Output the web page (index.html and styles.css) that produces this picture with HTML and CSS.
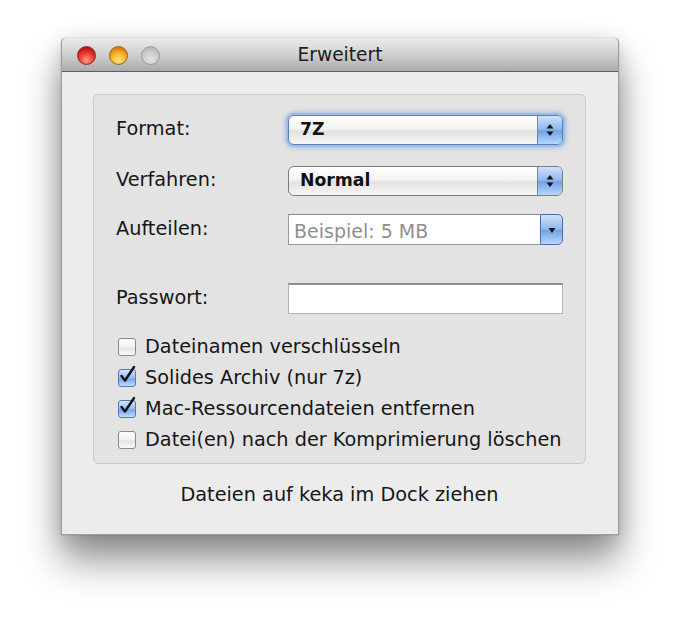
FILE: index.html
```html
<!DOCTYPE html>
<html>
<head>
<meta charset="utf-8">
<link rel="stylesheet" href="styles.css">
</head>
<body>
<div class="window">
  <div class="titlebar">
    <div class="lights">
      <span class="light red"></span>
      <span class="light yellow"></span>
      <span class="light gray"></span>
    </div>
    <div class="title">Erweitert</div>
  </div>
  <div class="content">
    <div class="group">
      <div class="row r-format">
        <div class="label">Format:</div>
        <div class="popup focused">
          <span class="ptext">7Z</span>
          <span class="arrows"><svg width="10" height="16" viewBox="0 0 10 16"><path d="M5 2 L8.5 6.5 L1.5 6.5 Z" fill="#111"/><path d="M5 14 L8.5 9.5 L1.5 9.5 Z" fill="#111"/></svg></span>
        </div>
      </div>
      <div class="row r-verf">
        <div class="label">Verfahren:</div>
        <div class="popup">
          <span class="ptext">Normal</span>
          <span class="arrows"><svg width="10" height="16" viewBox="0 0 10 16"><path d="M5 2 L8.5 6.5 L1.5 6.5 Z" fill="#111"/><path d="M5 14 L8.5 9.5 L1.5 9.5 Z" fill="#111"/></svg></span>
        </div>
      </div>
      <div class="row r-auf">
        <div class="label">Aufteilen:</div>
        <div class="combo">
          <span class="ctext">Beispiel: 5 MB</span>
          <span class="cbtn"><svg width="10" height="10" viewBox="0 0 10 10"><path d="M1.5 3 L8.5 3 L5 8 Z" fill="#111"/></svg></span>
        </div>
      </div>
      <div class="row r-pass">
        <div class="label">Passwort:</div>
        <div class="field"></div>
      </div>
      <div class="checks">
        <div class="check"><span class="box"></span><span>Dateinamen verschlüsseln</span></div>
        <div class="check"><span class="box on"><svg width="22" height="22" viewBox="0 0 22 22"><path d="M4.5 11 L8 15.5 L17 2" fill="none" stroke="#111" stroke-width="2.4" stroke-linejoin="round" stroke-linecap="round"/></svg></span><span>Solides Archiv (nur 7z)</span></div>
        <div class="check"><span class="box on"><svg width="22" height="22" viewBox="0 0 22 22"><path d="M4.5 11 L8 15.5 L17 2" fill="none" stroke="#111" stroke-width="2.4" stroke-linejoin="round" stroke-linecap="round"/></svg></span><span>Mac-Ressourcendateien entfernen</span></div>
        <div class="check"><span class="box"></span><span>Datei(en) nach der Komprimierung löschen</span></div>
      </div>
    </div>
    <div class="footer">Dateien auf keka im Dock ziehen</div>
  </div>
</div>
</body>
</html>
```
FILE: styles.css
```css
html, body {
  margin: 0;
  padding: 0;
  background: #ffffff;
}
body {
  padding-top: 38px;
  padding-left: 61px;
  min-height: 620px;
  box-sizing: border-box;
  font-family: "DejaVu Sans", "Liberation Sans", sans-serif;
  font-size: 19.3px;
  color: #161616;
}
.window {
  width: 558px;
  height: 497px;
  background: #ececec;
  border-radius: 5px 5px 0 0;
  box-shadow: 0 26px 38px rgba(0,0,0,0.42), 0 4px 22px rgba(0,0,0,0.16), 0 0 1px rgba(0,0,0,0.5);
  display: flex;
  flex-direction: column;
  box-sizing: border-box;
  border: 1px solid #9d9d9d;
  border-top: none;
}
.titlebar {
  height: 34px;
  background: linear-gradient(#ebebeb, #d3d3d3 45%, #aaaaaa);
  border-bottom: 1px solid #5c5c5c;
  border-radius: 5px 5px 0 0;
  display: flex;
  align-items: center;
  position: relative;
  box-sizing: border-box;
  flex-shrink: 0;
}
.lights {
  display: flex;
  gap: 13px;
  padding-left: 15px;
  padding-top: 1px;
}
.light {
  width: 19px;
  height: 19px;
  border-radius: 50%;
  box-sizing: border-box;
}
.light.red {
  background: radial-gradient(circle at 50% 78%, #ff9b8e 0%, #ef3a2f 45%, #b81712 80%);
  border: 1px solid #8a2a22;
}
.light.yellow {
  background: radial-gradient(circle at 50% 78%, #ffe67a 0%, #f8b52a 45%, #d7780c 80%);
  border: 1px solid #9a6a1c;
}
.light.gray {
  background: radial-gradient(circle at 50% 75%, #e4e4e4 0%, #cccccc 50%, #b5b5b5 85%);
  border: 1px solid #9d9d9d;
}
.title {
  position: absolute;
  left: 0;
  right: 0;
  top: 6px;
  text-align: center;
  font-size: 18.6px;
  color: #1c1c1c;
  pointer-events: none;
}
.content {
  flex: 1;
  display: flex;
  flex-direction: column;
  padding: 22px 0 0 31px;
}
.group {
  width: 493px;
  height: 370px;
  box-sizing: border-box;
  background: #e3e3e3;
  border: 1px solid #c9c9c9;
  border-radius: 5px;
  padding: 19px 0 0 22px;
  display: flex;
  flex-direction: column;
}
.row {
  display: flex;
  align-items: center;
  height: 31px;
}
.label {
  width: 172px;
  margin-top: -3px;
}
.r-verf { margin-top: 20px; }
.r-auf { margin-top: 18px; }
.r-pass { margin-top: 38px; }
.popup {
  width: 275px;
  height: 30px;
  box-sizing: border-box;
  border: 1px solid #7d7d7d;
  border-radius: 6px;
  background: linear-gradient(#ffffff, #f3f3f3 45%, #e2e2e2 55%, #f6f6f6);
  display: flex;
  align-items: center;
  position: relative;
  overflow: hidden;
}
.popup.focused {
  box-shadow: 0 0 0 2px #9dbdec, 0 0 4px 3px rgba(110,150,220,0.5);
  border-color: #5a7fb8;
}
.ptext {
  flex: 1;
  padding-left: 11px;
  font-weight: bold;
  font-size: 17.3px;
  color: #111;
  margin-top: -1px;
}
.arrows {
  width: 24px;
  height: 100%;
  border-left: 1px solid #6a86b6;
  background: linear-gradient(#cfe2fa, #8cb6ec 50%, #6ea2e6 52%, #b8d6fb);
  display: flex;
  align-items: center;
  justify-content: center;
}
.combo {
  width: 275px;
  height: 31px;
  display: flex;
  position: relative;
}
.ctext {
  flex: 1;
  background: #ffffff;
  border: 1px solid #9a9a9a;
  border-top-color: #8a8a8a;
  border-right: none;
  color: #8f8f8f;
  padding-left: 5px;
  display: flex;
  align-items: center;
  padding-top: 3px;
  box-sizing: border-box;
  font-size: 19px;
}
.cbtn {
  width: 23px;
  height: 31px;
  box-sizing: border-box;
  border: 1px solid #4f6da1;
  border-radius: 0 5px 5px 0;
  background: linear-gradient(#cfe2fa, #8cb6ec 50%, #6ea2e6 52%, #b8d6fb);
  display: flex;
  align-items: center;
  justify-content: center;
}
.field {
  width: 275px;
  height: 31px;
  box-sizing: border-box;
  background: #ffffff;
  border: 1px solid #b2b2b2;
  border-top: 2px solid #8d8d8d;
}
.checks {
  margin-top: 22px;
  display: flex;
  flex-direction: column;
  gap: 10px;
  margin-left: 2px;
}
.check {
  display: flex;
  align-items: center;
  gap: 9px;
  height: 21px;
}
.box {
  width: 18px;
  height: 18px;
  box-sizing: border-box;
  border: 1px solid #8a8a8a;
  border-radius: 3px;
  background: linear-gradient(#ffffff, #f2f2f2 50%, #e4e4e4 55%, #fbfbfb);
  position: relative;
  flex-shrink: 0;
}
.box.on {
  background: linear-gradient(#d4e6fb, #92bbef 50%, #72a6ea 55%, #c1dcfb);
  border-color: #5b79ad;
}
.box svg {
  position: absolute;
  left: -2px;
  top: -5px;
}
.footer {
  text-align: center;
  width: 493px;
  margin-top: 19px;
  color: #161616;
}
```
